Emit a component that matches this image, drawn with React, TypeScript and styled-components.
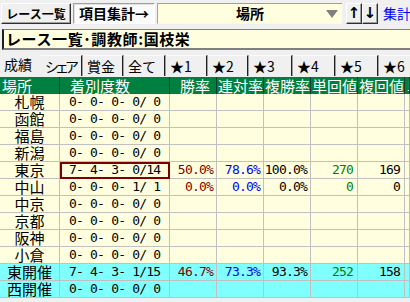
import React from 'react';
import styled, { createGlobalStyle } from 'styled-components';

const Global = createGlobalStyle`
  html, body { margin: 0; padding: 0; background: #f0f0f0; }
  body { font-family: "Noto Sans CJK JP", "Noto Sans", sans-serif; }
  #root { width: 410px; height: 302px; overflow: hidden; }
`;

const Page = styled.div`
  width: 410px;
  height: 302px;
  display: flex;
  flex-direction: column;
  background: #f0f0f0;
  overflow: hidden;
`;

const TopBar = styled.div`
  display: flex;
  align-items: stretch;
  height: 21px;
  margin-top: 3px;
  padding-left: 1px;
  white-space: nowrap;
`;

const RaisedButton = styled.div<{ $w: number; $ml?: number }>`
  box-sizing: border-box;
  width: ${p => p.$w}px;
  margin-left: ${p => p.$ml ?? 0}px;
  flex: none;
  display: flex;
  align-items: center;
  justify-content: center;
  background: #f0f0f0;
  border-top: 1px solid #ffffff;
  border-left: 1px solid #ffffff;
  border-right: 1px solid #303030;
  border-bottom: 1px solid #303030;
  box-shadow: inset -1px -1px 0 #a0a0a0;
  font-size: 12px;
  font-weight: 700;
  line-height: 19px;
  color: #000;
  overflow: hidden;
`;

const PressedButton = styled(RaisedButton)`
  background: #fbfbfb;
  border-top: 1px solid #a0a0a0;
  border-left: 1px solid #a0a0a0;
  border-right: 1px solid #ffffff;
  border-bottom: 1px solid #ffffff;
  box-shadow: inset 1px 1px 0 #e0e0e0;
  font-size: 14px;
`;

const ArrowButton = styled(RaisedButton)`
  font-size: 15px;
  font-family: "DejaVu Sans", sans-serif;
  font-weight: 700;
`;

const Combo = styled.div`
  box-sizing: border-box;
  width: 185px;
  margin-left: 2px;
  flex: none;
  position: relative;
  display: flex;
  align-items: center;
  justify-content: center;
  background: #ffffe0;
  border-top: 1px solid #a0a0a0;
  border-left: 1px solid #a0a0a0;
  border-bottom: 1px solid #f8f8f8;
  font-size: 14px;
  font-weight: 700;
  line-height: 19px;
`;

const ComboArrow = styled.svg`
  position: absolute;
  right: 4px;
  top: 6px;
`;

const LinkText = styled.div`
  margin-left: 5px;
  color: #0000ff;
  font-size: 14px;
  line-height: 21px;
  overflow: hidden;
`;

const TitleBox = styled.div`
  box-sizing: border-box;
  height: 21px;
  margin: 5px 0 0 2px;
  background: #ffffe0;
  border-top: 1px solid #808080;
  border-left: 2px solid #202020;
  border-bottom: 2px solid #808080;
  padding-left: 2px;
  font-size: 15px;
  font-weight: 700;
  line-height: 18px;
  letter-spacing: 0.6px;
  white-space: nowrap;
  color: #000;
`;

const TabRow = styled.div`
  display: flex;
  height: 21px;
  margin-top: 5px;
  white-space: nowrap;
  overflow: hidden;
`;

const Tab = styled.div<{ $w: number; $active?: boolean; $tight?: boolean }>`
  box-sizing: border-box;
  flex: none;
  width: ${p => p.$w}px;
  padding-left: 4px;
  font-size: 14px;
  line-height: ${p => (p.$active ? 18 : 20)}px;
  letter-spacing: ${p => (p.$tight ? '-4px' : '0')};
  color: #000;
  border-right: ${p => (p.$active ? '1px solid #f0f0f0' : '1px solid #202020')};
  box-shadow: ${p => (p.$active ? 'none' : '1px 0 0 #a0a0a0')};
  border-top: ${p => (p.$active ? 'none' : '1px solid #fafafa')};
  margin-right: 1px;
  overflow: hidden;
`;

const Table = styled.div`
  margin-top: 1px;
  display: flex;
  flex-direction: column;
`;

const COLS = '60px 110px 47px 47px 47px 47px 47px 5px';

const HeadRow = styled.div`
  display: grid;
  grid-template-columns: ${COLS};
  height: 17px;
  background: #008040;
`;

const HeadCell = styled.div<{ $pad: number }>`
  box-sizing: border-box;
  padding-left: ${p => p.$pad}px;
  border-right: 1px solid #1a3a2a;
  color: #ffffff;
  font-size: 15px;
  line-height: 17px;
  white-space: nowrap;
  overflow: hidden;
`;

const Row = styled.div<{ $cyan?: boolean }>`
  display: grid;
  grid-template-columns: ${COLS};
  height: 17px;
  background: ${p => (p.$cyan ? '#80ffff' : '#ffffe0')};
`;

const Cell = styled.div`
  box-sizing: border-box;
  border-right: 1px solid #c0c0c0;
  border-bottom: 1px solid #c0c0c0;
  height: 17px;
  overflow: hidden;
  white-space: pre;
`;

const PlaceCell = styled(Cell)`
  text-align: center;
  font-size: 15px;
  line-height: 16px;
  color: #000;
`;

const CountCell = styled(Cell)<{ $boxed?: boolean }>`
  padding-left: 9px;
  font-family: "DejaVu Sans Mono", monospace;
  font-size: 13px;
  letter-spacing: -0.8px;
  line-height: 16px;
  color: #000;
  outline: ${p => (p.$boxed ? '2px solid #800000' : 'none')};
  outline-offset: -2px;
`;

const NumCell = styled(Cell)<{ $color: string; $pr: number }>`
  text-align: right;
  padding-right: ${p => p.$pr}px;
  font-family: "DejaVu Sans Mono", monospace;
  font-size: 13px;
  letter-spacing: -0.8px;
  line-height: 16px;
  color: ${p => p.$color};
`;

const BottomStrip = styled.div`
  flex: 1;
  background: #f0f0f0;
`;

type RowData = {
  place: string;
  count: string;
  vals?: [string, string, string, string, string];
  cyan?: boolean;
  boxed?: boolean;
};

const rows: RowData[] = [
  { place: '札幌', count: '0- 0- 0- 0/ 0' },
  { place: '函館', count: '0- 0- 0- 0/ 0' },
  { place: '福島', count: '0- 0- 0- 0/ 0' },
  { place: '新潟', count: '0- 0- 0- 0/ 0' },
  { place: '東京', count: '7- 4- 3- 0/14', vals: ['50.0%', '78.6%', '100.0%', '270', '169'], boxed: true },
  { place: '中山', count: '0- 0- 0- 1/ 1', vals: ['0.0%', '0.0%', '0.0%', '0', '0'] },
  { place: '中京', count: '0- 0- 0- 0/ 0' },
  { place: '京都', count: '0- 0- 0- 0/ 0' },
  { place: '阪神', count: '0- 0- 0- 0/ 0' },
  { place: '小倉', count: '0- 0- 0- 0/ 0' },
  { place: '東開催', count: '7- 4- 3- 1/15', vals: ['46.7%', '73.3%', '93.3%', '252', '158'], cyan: true },
  { place: '西開催', count: '0- 0- 0- 0/ 0', cyan: true },
];

const valColors = ['#800000', '#0000ff', '#000000', '#008000', '#000000'];
const valPads = [3, 3, 3, 4, 4];

const headers: { label: string; pad: number }[] = [
  { label: '場所', pad: 2 },
  { label: '着別度数', pad: 10 },
  { label: '勝率', pad: 10 },
  { label: '連対率', pad: 1 },
  { label: '複勝率', pad: 1 },
  { label: '単回値', pad: 1 },
  { label: '複回値', pad: 1 },
  { label: '単勝', pad: 2 },
];

const tabs: { label: string; w: number; tight?: boolean }[] = [
  { label: '成績', w: 40 },
  { label: 'シェア', w: 41, tight: true },
  { label: '賞金', w: 40 },
  { label: '全て', w: 41 },
  { label: '★1', w: 41 },
  { label: '★2', w: 40 },
  { label: '★3', w: 43 },
  { label: '★4', w: 42 },
  { label: '★5', w: 42 },
  { label: '★6', w: 42 },
];

export default function App() {
  return (
    <>
      <Global />
      <Page>
        <TopBar>
          <RaisedButton $w={70}>レース一覧</RaisedButton>
          <PressedButton $w={82} $ml={2}>項目集計→</PressedButton>
          <Combo>
            場所
            <ComboArrow width="12" height="8" viewBox="0 0 12 8">
              <polygon points="0,0 12,0 6,8" fill="#808080" />
            </ComboArrow>
          </Combo>
          <ArrowButton $w={16} $ml={4}>↑</ArrowButton>
          <ArrowButton $w={16}>↓</ArrowButton>
          <LinkText>集計表</LinkText>
        </TopBar>
        <TitleBox>レース一覧･調教師:国枝栄</TitleBox>
        <TabRow>
          {tabs.map((t, i) => (
            <Tab key={t.label} $w={t.w} $active={i === 0} $tight={t.tight}>
              {t.label}
            </Tab>
          ))}
        </TabRow>
        <Table>
          <HeadRow>
            {headers.map(h => (
              <HeadCell key={h.label} $pad={h.pad}>
                {h.label}
              </HeadCell>
            ))}
          </HeadRow>
          {rows.map(r => (
            <Row key={r.place} $cyan={r.cyan}>
              <PlaceCell>{r.place}</PlaceCell>
              <CountCell $boxed={r.boxed}>{r.count}</CountCell>
              {[0, 1, 2, 3, 4].map(i => (
                <NumCell key={i} $color={valColors[i]} $pr={valPads[i]}>
                  {r.vals ? r.vals[i] : ''}
                </NumCell>
              ))}
              <Cell />
            </Row>
          ))}
        </Table>
        <BottomStrip />
      </Page>
    </>
  );
}
